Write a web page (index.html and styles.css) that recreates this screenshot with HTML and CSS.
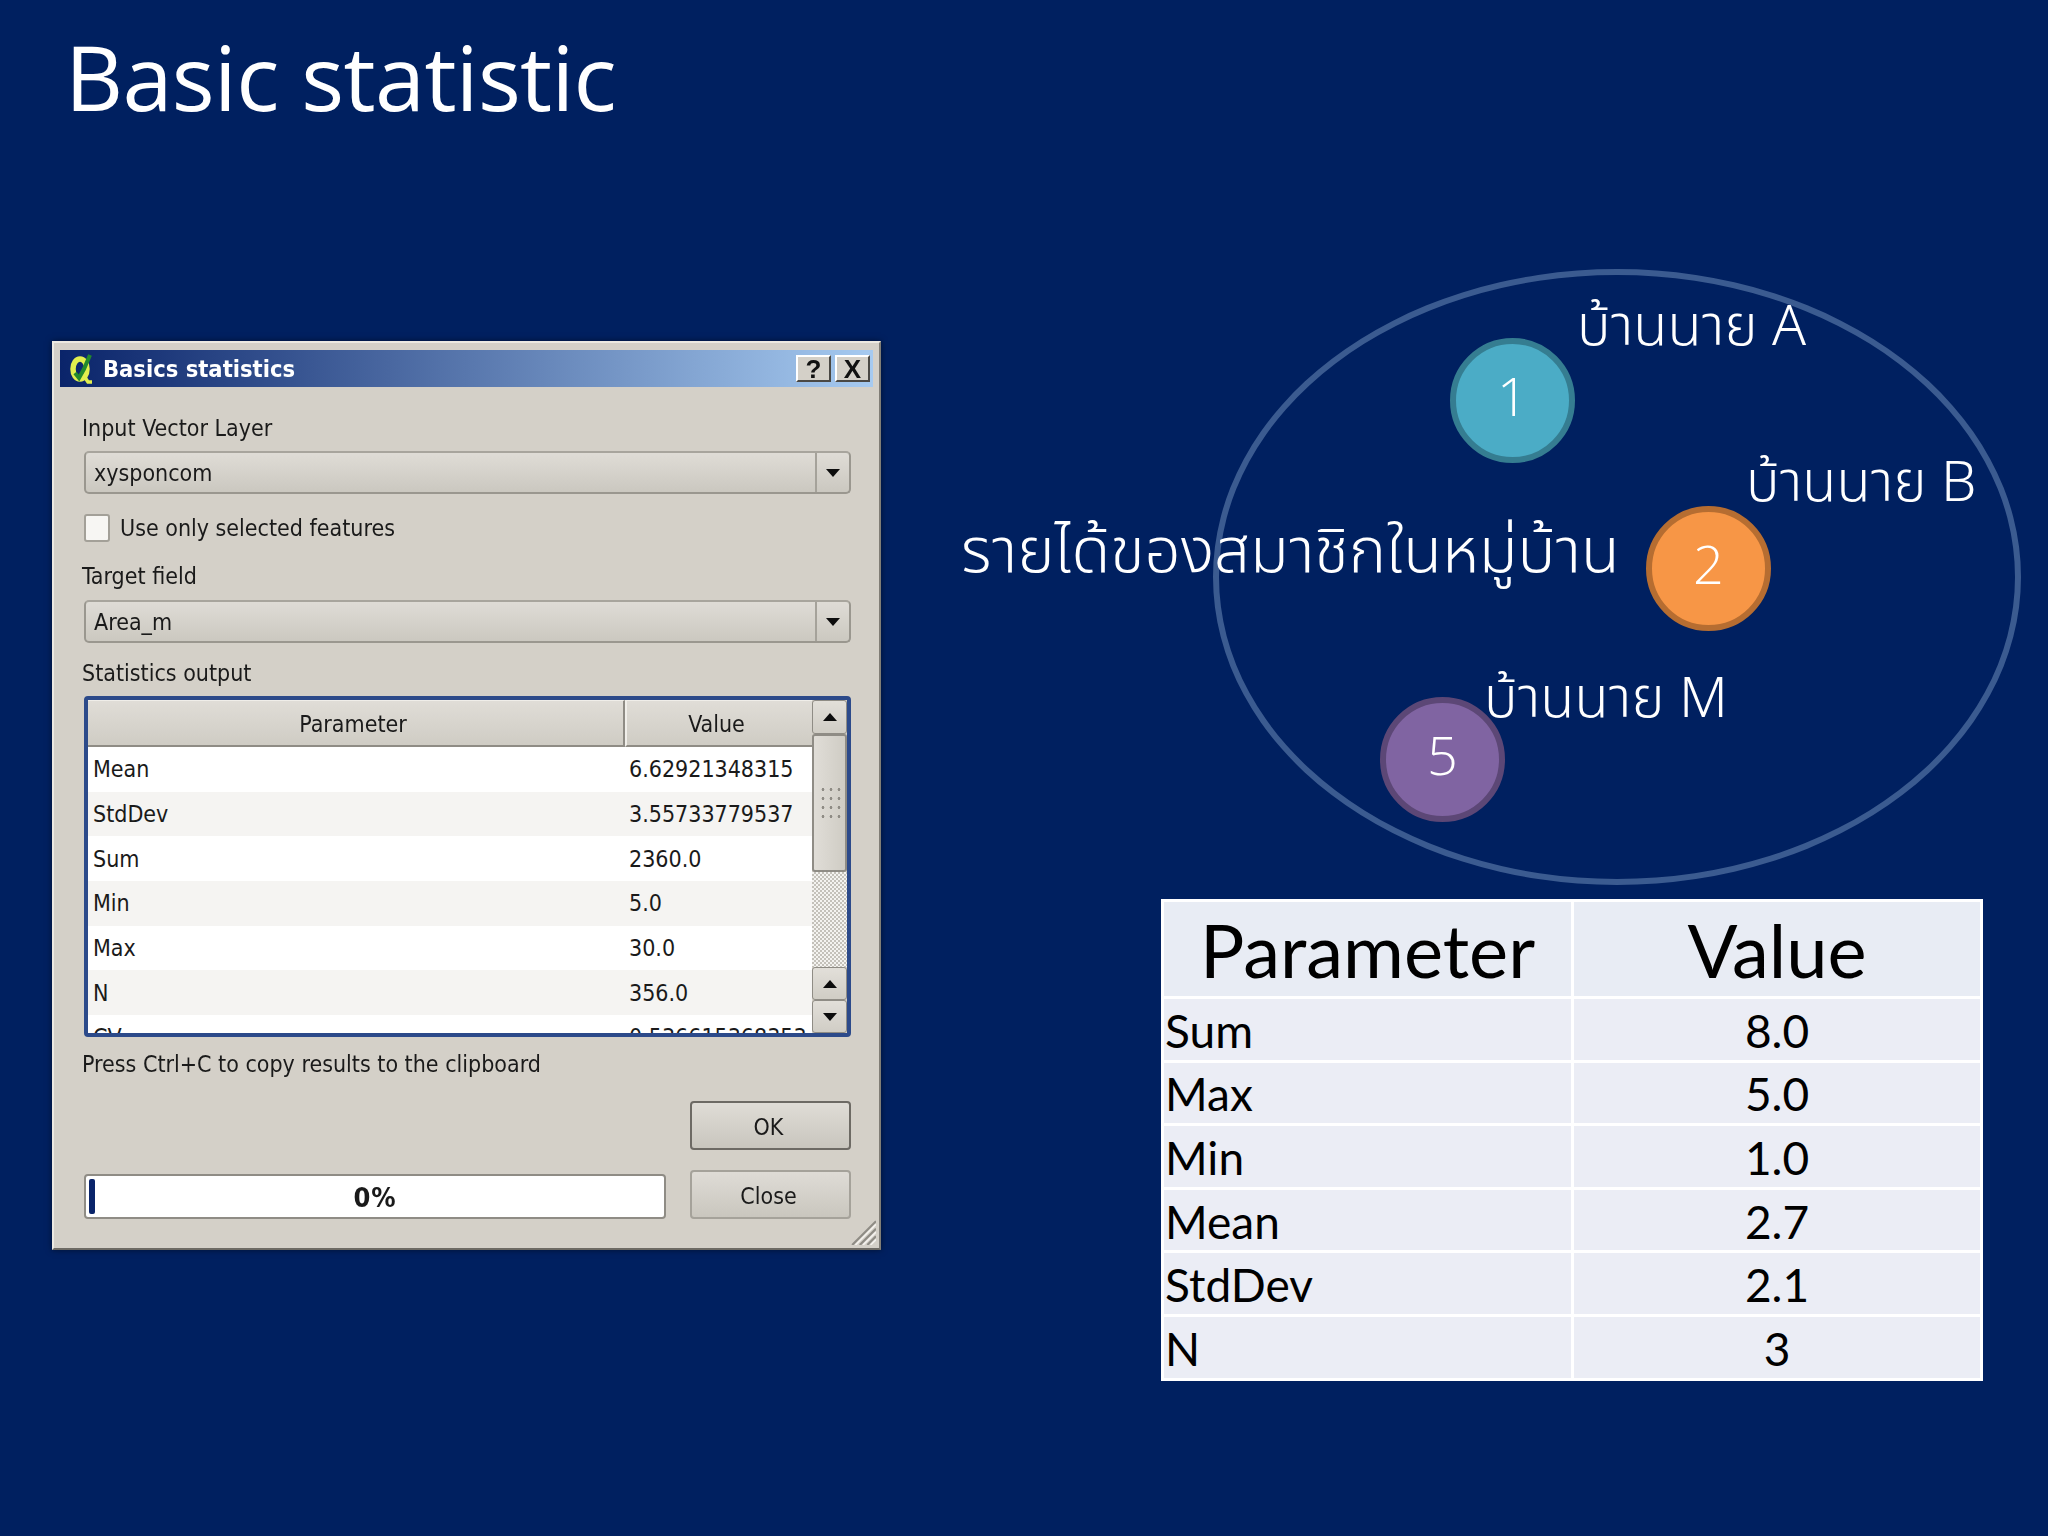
FILE: index.html
```html
<!DOCTYPE html>
<html lang="en">
<head>
<meta charset="utf-8">
<title>Basic statistic</title>
<link rel="stylesheet" href="styles.css">
</head>
<body>
<main class="slide">
  <h1 class="slide-title">Basic statistic</h1>
  <div class="stage">
    <section class="dialog">
      <header class="titlebar">
        <svg class="qgis" viewBox="0 0 24 30" aria-hidden="true">
          <ellipse cx="11" cy="15" rx="7" ry="10" fill="none" stroke="#e2ee4e" stroke-width="5.5"/>
          <path d="M15 22l4 6h4" fill="none" stroke="#e2ee4e" stroke-width="3.5"/>
          <path d="M6 19l4 5 5-9 6-14" fill="none" stroke="#23892c" stroke-width="4"/>
        </svg>
        <span class="titlebar-text">Basics statistics</span>
        <span class="winbtn">?</span>
        <span class="winbtn">X</span>
      </header>
      <div class="dialog-body">
        <div class="lbl lbl-first">Input Vector Layer</div>
        <div class="combo"><span class="combo-text">xysponcom</span><span class="combo-arrow"><i class="tri-down"></i></span></div>
        <div class="check-row"><span class="check"></span><span>Use only selected features</span></div>
        <div class="lbl lbl-target">Target field</div>
        <div class="combo"><span class="combo-text">Area_m</span><span class="combo-arrow"><i class="tri-down"></i></span></div>
        <div class="lbl lbl-output">Statistics output</div>
        <div class="grid-frame">
          <div class="grid-main">
            <div class="grid-head"><div class="hcell hcell-param">Parameter</div><div class="hcell hcell-val">Value</div></div>
            <div class="grid-rows">
              <div class="grow"><span class="gc-p">Mean</span><span class="gc-v">6.62921348315</span></div>
              <div class="grow alt"><span class="gc-p">StdDev</span><span class="gc-v">3.55733779537</span></div>
              <div class="grow"><span class="gc-p">Sum</span><span class="gc-v">2360.0</span></div>
              <div class="grow alt"><span class="gc-p">Min</span><span class="gc-v">5.0</span></div>
              <div class="grow"><span class="gc-p">Max</span><span class="gc-v">30.0</span></div>
              <div class="grow alt"><span class="gc-p">N</span><span class="gc-v">356.0</span></div>
              <div class="grow"><span class="gc-p">CV</span><span class="gc-v">0.536615368353</span></div>
            </div>
          </div>
          <div class="scrollbar">
            <div class="sb-btn sb-top"><i class="tri-up"></i></div>
            <div class="sb-thumb"><span class="sb-grip"></span></div>
            <div class="sb-track"></div>
            <div class="sb-btn"><i class="tri-up"></i></div>
            <div class="sb-btn"><i class="tri-down"></i></div>
          </div>
        </div>
        <div class="lbl lbl-press">Press Ctrl+C to copy results to the clipboard</div>
        <div class="ok-row"><span class="btn btn-ok">OK</span></div>
        <div class="bottom-row">
          <div class="progress"><span class="progress-chunk"></span><span class="progress-text">0%</span></div>
          <span class="btn btn-close">Close</span>
        </div>
      </div>
      <svg class="grip" viewBox="0 0 24 24" aria-hidden="true">
        <path d="M24 2L2 24M24 9L9 24M24 16L16 24" stroke="#8f8c85" stroke-width="2" fill="none"/>
        <path d="M24 5L5 24M24 12L12 24M24 19L19 24" stroke="#f4f2ee" stroke-width="1.5" fill="none"/>
      </svg>
    </section>

    <div class="right">
      <div class="diagram">
        <div class="ring"></div>
        <div class="node node-1">1</div>
        <div class="node node-2">2</div>
        <div class="node node-5">5</div>
        <div class="dlabel dlabel-main">รายได้ของสมาชิกในหมู่บ้าน</div>
        <div class="dlabel dlabel-a">บ้านนาย A</div>
        <div class="dlabel dlabel-b">บ้านนาย B</div>
        <div class="dlabel dlabel-m">บ้านนาย M</div>
      </div>
      <table class="stats">
        <thead><tr><th>Parameter</th><th>Value</th></tr></thead>
        <tbody>
          <tr><td>Sum</td><td>8.0</td></tr>
          <tr><td>Max</td><td>5.0</td></tr>
          <tr><td>Min</td><td>1.0</td></tr>
          <tr><td>Mean</td><td>2.7</td></tr>
          <tr><td>StdDev</td><td>2.1</td></tr>
          <tr><td>N</td><td>3</td></tr>
        </tbody>
      </table>
    </div>
  </div>
</main>
</body>
</html>
```
FILE: styles.css
```css
* { box-sizing: border-box; }
html, body { margin: 0; padding: 0; }
body { background: #002060; }
.slide {
  width: 2048px; height: 1536px; overflow: hidden; background: #002060;
  display: flex; flex-direction: column;
}
.slide-title {
  margin: 0; height: 270px; padding: 21px 0 0 65px;
  font: 400 90px/110px "Open Sans", "Noto Sans", sans-serif;
  color: #fff; letter-spacing: -0.65px;
}
.stage { display: flex; align-items: flex-start; padding-left: 52px; }

/* dialog */
.dialog {
  position: relative; width: 829px; height: 909px; margin-top: 71px;
  background: #d4d0c8; padding: 7px 6px;
  border: 2px solid; border-color: #ece9e2 #807d76 #6d6a64 #ece9e2;
  box-shadow: 0 0 6px rgba(0,0,0,.5);
  font: 400 23px/28px "DejaVu Sans Condensed", "Liberation Sans", sans-serif;
  color: #1a1a1a;
  filter: blur(.45px);
}
.titlebar {
  display: flex; align-items: center; height: 37px; padding: 0 3px 0 9px; gap: 4px;
  background: linear-gradient(90deg, #0a246a, #a6caf0);
  color: #fff;
}
.qgis { width: 24px; height: 30px; margin-right: 6px; flex: none; }
.titlebar-text { font-weight: 700; font-size: 23.5px; flex: 1; }
.winbtn {
  width: 35px; height: 27px; display: flex; align-items: center; justify-content: center;
  background: #d4d0c8; color: #111; font: 700 26px/1 "Liberation Sans", sans-serif;
  border: 2px solid; border-color: #fff #4a4844 #4a4844 #fff;
}
.dialog-body { display: flex; flex-direction: column; padding: 0 22px 0 24px; }
.lbl { height: 28px; margin-left: -2px; white-space: nowrap; }
.lbl-first { margin-top: 27px; margin-bottom: 9px; }
.combo {
  height: 43px; display: flex; align-items: center; border-radius: 5px;
  border: 2px solid #9a978f; border-top-color: #a8a59d;
  background: linear-gradient(#dfdcd6, #cbc8c0);
}
.combo-text { flex: 1; padding-left: 8px; }
.combo-arrow {
  width: 34px; align-self: stretch; display: flex; align-items: center; justify-content: center;
  border-left: 2px solid #a5a29a;
}
.tri-down, .tri-up { display: block; width: 0; height: 0; border-left: 7px solid transparent; border-right: 7px solid transparent; }
.tri-down { border-top: 8px solid #0d0d0d; }
.tri-up { border-bottom: 8px solid #0d0d0d; }
.check-row { display: flex; align-items: center; gap: 10px; margin-top: 20px; height: 28px; }
.check {
  width: 26px; height: 28px; background: #f7f6f3; border: 2px solid #a3a098; border-radius: 3px;
}
.lbl-target { margin-top: 20px; margin-bottom: 10px; }
.lbl-output { margin-top: 16px; margin-bottom: 9px; }
.grid-frame {
  height: 341px; display: flex; border: 4px solid #2c4a8a; border-radius: 4px; overflow: hidden; background: #fff;
}
.grid-main { width: 724px; flex: none; display: flex; flex-direction: column; }
.grid-head { display: flex; height: 47px; flex: none; }
.hcell {
  display: flex; align-items: center; justify-content: center; height: 47px; padding-top: 2px;
  background: linear-gradient(#e0ddd7, #cfccc4);
  border-bottom: 2px solid #8f8c85; border-right: 2px solid #8f8c85; border-top: 1px solid #f0eee9;
}
.hcell-param { width: 537px; padding-right: 5px; }
.hcell-val { width: 187px; border-left: 2px solid #f0eee9; border-right: 0; padding-right: 6px; }
.grid-rows { flex: 1; overflow: hidden; }
.grow { height: 44.7px; display: flex; align-items: center; background: #fff; }
.grow.alt { background: #f5f4f2; }
.gc-p { width: 541px; padding-left: 5px; }
.gc-v { flex: 1; white-space: nowrap; overflow: hidden; }
.scrollbar { flex: 1; display: flex; flex-direction: column; background: #d4d0c8; }
.sb-btn {
  height: 33px; flex: none; display: flex; align-items: center; justify-content: center;
  background: linear-gradient(#e2dfd9, #d0cdc5);
  border: 1px solid #8f8c85; border-radius: 3px;
}
.sb-top { height: 34px; }
.sb-thumb {
  height: 138px; flex: none; display: flex; align-items: center; justify-content: center;
  background: linear-gradient(90deg, #e0ddd7, #cfccc4); border: 2px solid #8f8c85; border-radius: 3px;
}
.sb-grip {
  width: 22px; height: 36px;
  background-image: radial-gradient(circle, #8f8c85 1.3px, transparent 1.6px);
  background-size: 8px 9px;
}
.sb-track {
  flex: 1;
  background: repeating-conic-gradient(#c4c1ba 0 25%, #f4f3f0 0 50%) 0 0 / 4px 4px;
}
.lbl-press { margin-top: 13px; }
.ok-row { display: flex; justify-content: flex-end; margin-top: 23px; }
.btn {
  width: 161px; display: flex; align-items: center; justify-content: center;
  background: linear-gradient(#dfdcd6, #c9c6be);
  border: 2px solid #8a8780; border-radius: 4px; padding-right: 4px;
}
.btn-ok { height: 49px; border-color: #6d6a64; padding-top: 3px; }
.bottom-row { display: flex; justify-content: space-between; align-items: flex-end; margin-top: 20px; }
.btn-close { height: 49px; border-color: #a5a29a; padding-top: 2px; }
.progress {
  width: 582px; height: 45px; display: flex; align-items: center; justify-content: center; position: relative;
  background: #fff; border: 2px solid #8f8c85; border-radius: 4px;
  font-weight: 700; font-size: 27px; letter-spacing: 1px; padding-top: 2px;
}
.progress-chunk { position: absolute; left: 3px; top: 3px; bottom: 3px; width: 6px; background: #0a246a; border-radius: 2px; }
.grip { position: absolute; right: 3px; bottom: 3px; width: 26px; height: 26px; }

/* right column */
.right { margin-left: 80px; width: 1058px; display: flex; flex-direction: column; }
.diagram { position: relative; height: 620px; }
.ring {
  position: absolute; left: 252px; top: -1px; width: 808px; height: 616px;
  border: 6px solid #3b5b90; border-radius: 50%;
}
.node {
  position: absolute; width: 125px; height: 125px; border-radius: 50%; border: 6px solid;
  display: flex; align-items: center; justify-content: center; padding-bottom: 12px;
  color: #fff; font: 300 54px/1 "Open Sans", sans-serif;
}
.node-1 { left: 489px; top: 68px; background: #4bacc6; border-color: #357d91; }
.node-2 { left: 685px; top: 236px; background: #f79646; border-color: #b66d31; }
.node-5 { left: 419px; top: 427px; background: #8064a2; border-color: #5c4776; }
.dlabel {
  position: absolute; color: #fff; white-space: nowrap;
  font: 300 56px/80px "Noto Sans Thai", "Noto Sans", "DejaVu Sans", sans-serif;
}
.dlabel-main { left: 0; top: 243px; font-size: 63.4px; }
.dlabel-a { left: 616px; top: 18px; }
.dlabel-b { left: 785px; top: 174px; }
.dlabel-m { left: 523px; top: 390px; }
.stats {
  margin: 9px 0 0 200px; width: 822px; height: 479px; border-collapse: collapse; table-layout: fixed;
  font-family: "Lato", "Open Sans", sans-serif; color: #000;
}
.stats th, .stats td { border: 3px solid #fff; padding: 0; }
.stats th { height: 97px; font-weight: 400; font-size: 74px; text-align: center; background: #e8ecf4; }
.stats th:first-child { width: 410px; }
.stats td { height: 63.6px; font-size: 46px; padding-top: 2px; text-align: center; background: #ebedf5; }
.stats td:first-child { text-align: left; padding-left: 1px; }
```
